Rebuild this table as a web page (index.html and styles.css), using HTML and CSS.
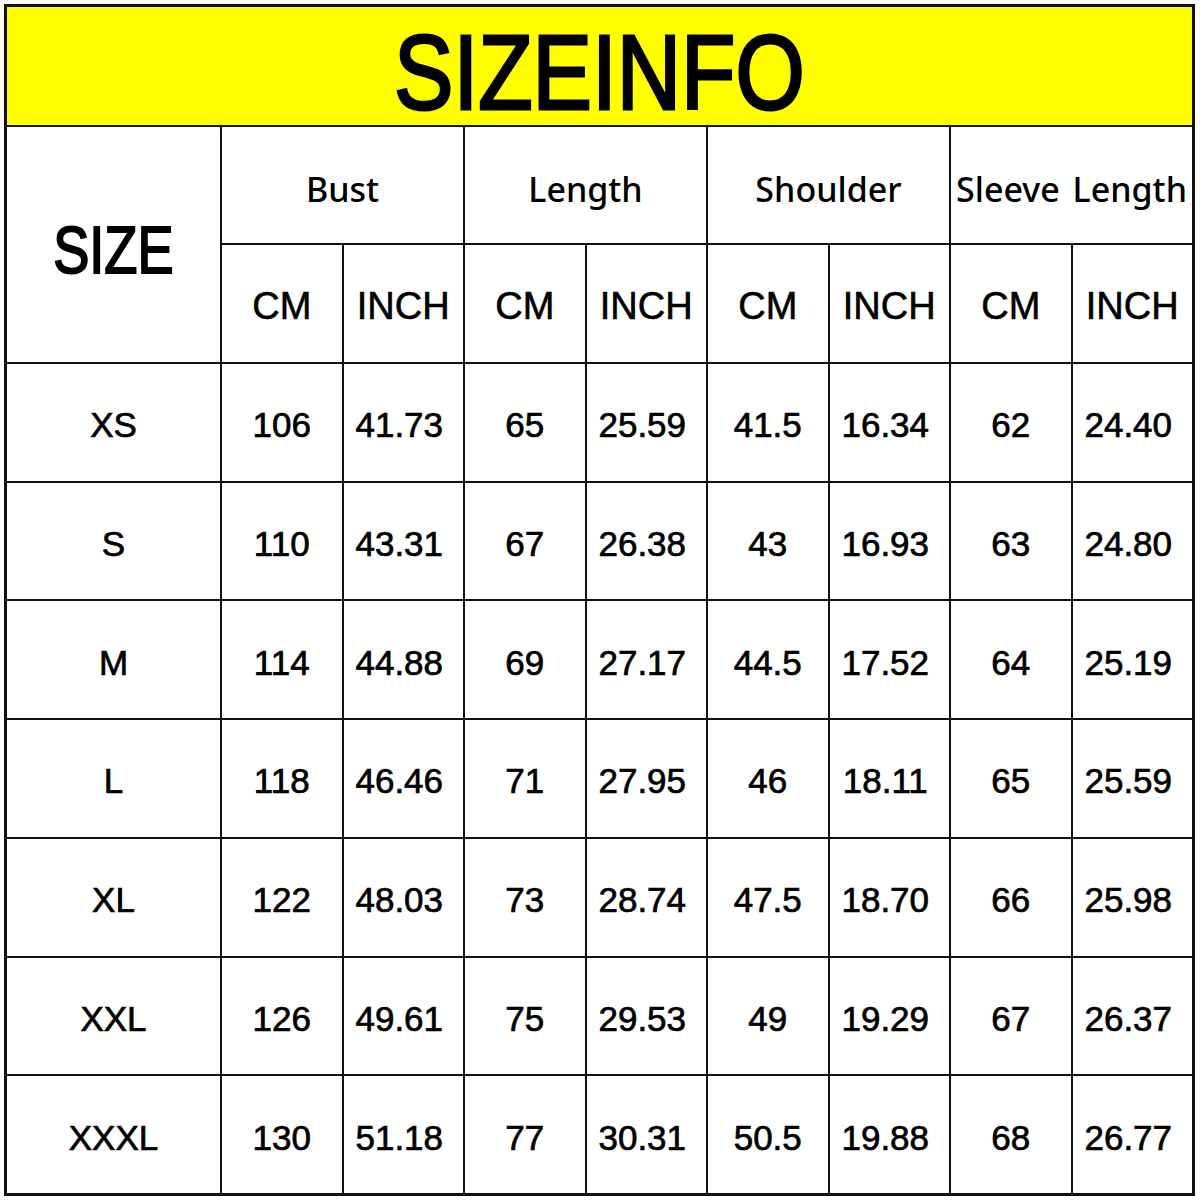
FILE: index.html
```html
<!DOCTYPE html>
<html lang="en">
<head>
<meta charset="utf-8">
<title>Size Info</title>
<link rel="stylesheet" href="styles.css">
</head>
<body>
<div class="sheet">
  <div class="title"><span class="title-text">SIZEINFO</span></div>

  <div class="size-head"><span class="size-text">SIZE</span></div>
  <div class="group">Bust</div>
  <div class="group">Length</div>
  <div class="group">Shoulder</div>
  <div class="group sleeve">Sleeve Length</div>

  <div class="unit">CM</div><div class="unit">INCH</div>
  <div class="unit">CM</div><div class="unit">INCH</div>
  <div class="unit">CM</div><div class="unit">INCH</div>
  <div class="unit">CM</div><div class="unit">INCH</div>

  <div class="cell">XS</div><div class="cell">106</div><div class="cell in">41.73</div><div class="cell">65</div><div class="cell in">25.59</div><div class="cell">41.5</div><div class="cell in">16.34</div><div class="cell">62</div><div class="cell in">24.40</div>
  <div class="cell">S</div><div class="cell">110</div><div class="cell in">43.31</div><div class="cell">67</div><div class="cell in">26.38</div><div class="cell">43</div><div class="cell in">16.93</div><div class="cell">63</div><div class="cell in">24.80</div>
  <div class="cell">M</div><div class="cell">114</div><div class="cell in">44.88</div><div class="cell">69</div><div class="cell in">27.17</div><div class="cell">44.5</div><div class="cell in">17.52</div><div class="cell">64</div><div class="cell in">25.19</div>
  <div class="cell">L</div><div class="cell">118</div><div class="cell in">46.46</div><div class="cell">71</div><div class="cell in">27.95</div><div class="cell">46</div><div class="cell in">18.11</div><div class="cell">65</div><div class="cell in">25.59</div>
  <div class="cell">XL</div><div class="cell">122</div><div class="cell in">48.03</div><div class="cell">73</div><div class="cell in">28.74</div><div class="cell">47.5</div><div class="cell in">18.70</div><div class="cell">66</div><div class="cell in">25.98</div>
  <div class="cell">XXL</div><div class="cell">126</div><div class="cell in">49.61</div><div class="cell">75</div><div class="cell in">29.53</div><div class="cell">49</div><div class="cell in">19.29</div><div class="cell">67</div><div class="cell in">26.37</div>
  <div class="cell">XXXL</div><div class="cell">130</div><div class="cell in">51.18</div><div class="cell">77</div><div class="cell in">30.31</div><div class="cell">50.5</div><div class="cell in">19.88</div><div class="cell">68</div><div class="cell in">26.77</div>
</div>
</body>
</html>
```

FILE: styles.css
```css
html, body {
  margin: 0;
  padding: 0;
  background: #ffffff;
}

body {
  padding: 4px 0 0 4px;
  font-family: "Liberation Sans", Arial, sans-serif;
  color: #000;
}

.sheet {
  width: 1185px;
  height: 1186px;
  border: 3px solid #111;
  background: #111;
  display: grid;
  grid-template-columns: 213px repeat(8, 1fr);
  grid-template-rows: 118px 116px 117px repeat(7, 1fr);
  gap: 2px;
}

.sheet > div {
  background: #fff;
  display: flex;
  align-items: center;
  justify-content: center;
  white-space: nowrap;
  box-sizing: border-box;
}

.sheet > .title {
  grid-column: 1 / -1;
  background: #ffff00;
  padding-top: 12px;
}

.title-text {
  display: inline-block;
  font-weight: 400;
  font-size: 106px;
  line-height: 1.1;
  -webkit-text-stroke: 3px #000;
  transform: scaleX(0.84);
}

.size-head {
  grid-row: span 2;
  padding-top: 12px;
}

.size-text {
  display: inline-block;
  font-weight: 400;
  font-size: 66px;
  line-height: 1.1;
  -webkit-text-stroke: 2px #000;
  transform: scaleX(0.82);
}

.group {
  grid-column: span 2;
  font-family: "Noto Sans", "Liberation Sans", sans-serif;
  font-weight: 500;
  font-size: 34px;
  padding-top: 8px;
}

.sleeve {
  word-spacing: 4px;
}

.unit {
  font-size: 38px;
  -webkit-text-stroke: 0.6px #000;
  padding-top: 6px;
}

.cell {
  font-size: 35px;
  -webkit-text-stroke: 0.7px #000;
  padding-top: 6px;
}

.cell.in {
  padding-right: 8px;
}
```
